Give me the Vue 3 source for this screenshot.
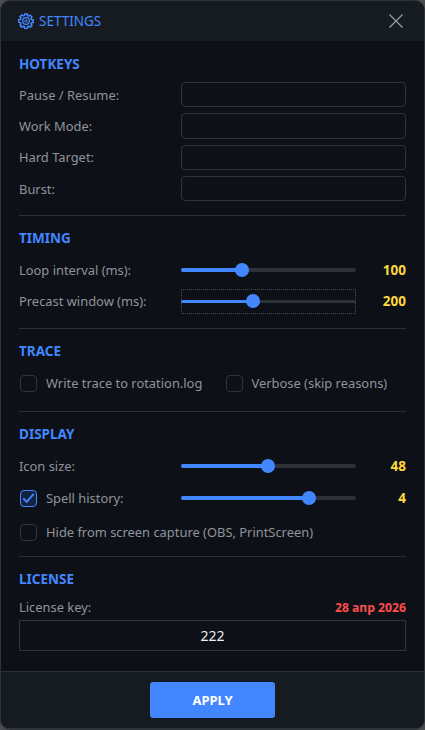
<script setup>
const hotkeys = ['Pause / Resume:', 'Work Mode:', 'Hard Target:', 'Burst:']
</script>

<template>
  <div class="win">
    <header class="head">
      <svg class="gear" viewBox="0 0 16 16" width="16" height="16" fill="none" stroke="#4287ff">
        <path stroke-width="1.500" d="M6.700 1h2.600l.3 1.700 1.200.5 1.400-1 1.800 1.800-1 1.400.5 1.200 1.700.3v2.600l-1.700.3-.5 1.200 1 1.400-1.800 1.800-1.400-1-1.200.5-.3 1.700H6.700l-.3-1.700-1.200-.5-1.400 1-1.800-1.800 1-1.400-.5-1.200L.8 9.300V6.700l1.700-.3.5-1.200-1-1.400 1.800-1.800 1.400 1 1.200-.5z"/>
        <circle cx="8" cy="8" r="3.300" stroke-width="1.300"/>
        <circle cx="8" cy="8" r="1.200" stroke-width="1"/>
      </svg>
      <span class="title">SETTINGS</span>
      <svg class="close" viewBox="0 0 14 14" width="14" height="14" stroke="#9aa0a8" stroke-width="1.200" fill="none">
        <path d="M.5.500l13 13M13.500.500l-13 13"/>
      </svg>
    </header>

    <main class="body">
      <section class="sec hot">
        <h2>HOTKEYS</h2>
        <div class="hotrows">
          <div v-for="h in hotkeys" :key="h" class="hotrow">
            <label class="lbl">{{ h }}</label>
            <div class="input"></div>
          </div>
        </div>
      </section>

      <section class="sec timing">
        <h2>TIMING</h2>
        <div class="row r1">
          <label class="lbl">Loop interval (ms):</label>
          <div class="slider"><div class="fill f1"></div><div class="thumb"></div></div>
          <span class="val">100</span>
        </div>
        <div class="row r2">
          <label class="lbl">Precast window (ms):</label>
          <div class="slider focus"><div class="fill f2"></div><div class="thumb"></div></div>
          <span class="val">200</span>
        </div>
      </section>

      <section class="sec trace">
        <h2>TRACE</h2>
        <div class="checks">
          <div class="chk"><span class="box"></span><span class="chklbl">Write trace to rotation.log</span></div>
          <div class="chk"><span class="box"></span><span class="chklbl">Verbose (skip reasons)</span></div>
        </div>
      </section>

      <section class="sec display">
        <h2>DISPLAY</h2>
        <div class="row r1">
          <label class="lbl">Icon size:</label>
          <div class="slider"><div class="fill f3"></div><div class="thumb"></div></div>
          <span class="val">48</span>
        </div>
        <div class="row r3">
          <div class="chk">
            <span class="box on">
              <svg viewBox="0 0 16 16" width="16" height="16" fill="none" stroke="#4287ff" stroke-width="2"><path d="M2.500 8.500l3.700 3.700 7.300-8.700"/></svg>
            </span>
            <span class="chklbl">Spell history:</span>
          </div>
          <div class="slider"><div class="fill f4"></div><div class="thumb"></div></div>
          <span class="val">4</span>
        </div>
        <div class="chk hide"><span class="box"></span><span class="chklbl">Hide from screen capture (OBS, PrintScreen)</span></div>
      </section>

      <section class="sec license">
        <h2>LICENSE</h2>
        <div class="lichead">
          <label class="lbl">License key:</label>
          <span class="expiry">28 апр 2026</span>
        </div>
        <div class="licinput">222</div>
      </section>
    </main>

    <footer class="foot">
      <button class="apply">APPLY</button>
    </footer>
  </div>
</template>

<style>
html, body { margin: 0; background: #4a4d50; }
</style>

<style scoped>
* { box-sizing: border-box; }
.win {
  width: 425px;
  height: 730px;
  display: flex;
  flex-direction: column;
  background: #0d1017;
  border: 1px solid #2f343b;
  border-bottom-width: 2px;
  border-radius: 10px;
  overflow: hidden;
  font-family: "Noto Sans", "Open Sans", sans-serif;
  font-size: 12.900px;
  color: #8f949b;
}
.head {
  height: 40px;
  flex: none;
  background: #161b22;
  display: flex;
  align-items: center;
  padding: 0 21px 0 17px;
}
.gear { flex: none; margin-right: 5px; }
.title { color: #4287ff; font-size: 13.500px; }
.close { margin-left: auto; }
.body { flex: 1; padding: 0 18px; min-height: 0; }
.sec { border-bottom: 1px solid #2b2f36; }
.license { border-bottom: 0; }
h2 {
  margin: 0;
  height: 18px;
  line-height: 18px;
  color: #4287ff;
  font-size: 13.500px;
  font-weight: 700;
}
.lbl { line-height: 18px; white-space: nowrap; }
.hot { padding: 14px 0 14px; height: 175px; }
.hotrows { margin-top: 9px; display: flex; flex-direction: column; gap: 6px; }
.hotrow { display: flex; align-items: center; height: 25.300px; }
.hotrow .lbl { width: 162px; flex: none; }
.input {
  flex: 1;
  height: 100%;
  border: 1px solid #2f343b;
  border-radius: 4px;
  background: #0d1017;
}
.row { display: flex; align-items: center; height: 18px; }
.row .lbl { width: 162px; flex: none; }
.timing { height: 113px; padding-top: 13px; }
.timing .r1 { margin-top: 14px; }
.timing .r2 { margin-top: 13px; }
.slider {
  position: relative;
  width: 175px;
  height: 25px;
  flex: none;
  display: flex;
  align-items: center;
}
.slider::before {
  content: "";
  position: absolute;
  left: 0;
  right: 0;
  top: 10px;
  height: 4px;
  border-radius: 2px;
  background: #2d3238;
}
.fill {
  position: absolute;
  left: 0;
  top: 10px;
  height: 4px;
  border-radius: 2px;
  background: #4287ff;
}
.thumb {
  position: absolute;
  top: 5px;
  width: 14px;
  height: 14px;
  margin-left: -7px;
  border-radius: 50%;
  background: #4287ff;
}
.f1 { width: 61px; }
.f1 + .thumb { left: 61px; }
.f2 { width: 72px; }
.f2 + .thumb { left: 72px; }
.f3 { width: 87px; }
.f3 + .thumb { left: 87px; }
.f4 { width: 127.500px; }
.f4 + .thumb { left: 127.500px; }
.focus { outline: 1px dotted #4a4e54; outline-offset: -1px; }
.focus::before, .focus .fill { height: 3px; top: 11px; }
.focus .thumb { top: 5.500px; }
.val {
  flex: 1;
  text-align: right;
  color: #ffd83b;
  font-weight: 700;
  font-size: 13.500px;
}
.trace { height: 83px; padding-top: 13px; }
.checks { display: flex; align-items: center; margin-top: 14px; }
.chk { display: flex; align-items: center; }
.checks .chk:first-child { width: 205.500px; flex: none; }
.box {
  width: 17px;
  height: 17px;
  flex: none;
  margin-left: 1px;
  margin-right: 9px;
  border: 1px solid #2f343b;
  border-radius: 4px;
  display: flex;
  align-items: center;
  justify-content: center;
}
.box.on { border-color: #4287ff; background: #13233f; }
.chklbl { white-space: nowrap; line-height: 18px; }
.display { height: 145px; padding-top: 13px; }
.display .r1 { margin-top: 14px; }
.r3 { margin-top: 14px; }
.r3 .chk { width: 162px; flex: none; }
.hide { margin-top: 16px; }
.license { padding-top: 13px; }
.lichead { display: flex; justify-content: space-between; margin-top: 10px; height: 18px; align-items: center; }
.expiry { color: #ff4d4d; font-weight: 700; font-size: 12.200px; }
.licinput {
  margin-top: 4px;
  height: 31px;
  border: 1px solid #2f343b;
  background: #0d1017;
  color: #eceff2;
  font-size: 14px;
  display: flex;
  align-items: center;
  justify-content: center;
}
.foot {
  height: 57px;
  flex: none;
  background: #161b22;
  border-top: 1px solid #2b2f36;
  display: flex;
  justify-content: center;
  padding-top: 10px;
}
.apply {
  width: 125px;
  height: 36px;
  border: 0;
  border-radius: 3px;
  background: #4287ff;
  color: #fff;
  font-family: inherit;
  font-weight: 700;
  font-size: 13px;
}
</style>
